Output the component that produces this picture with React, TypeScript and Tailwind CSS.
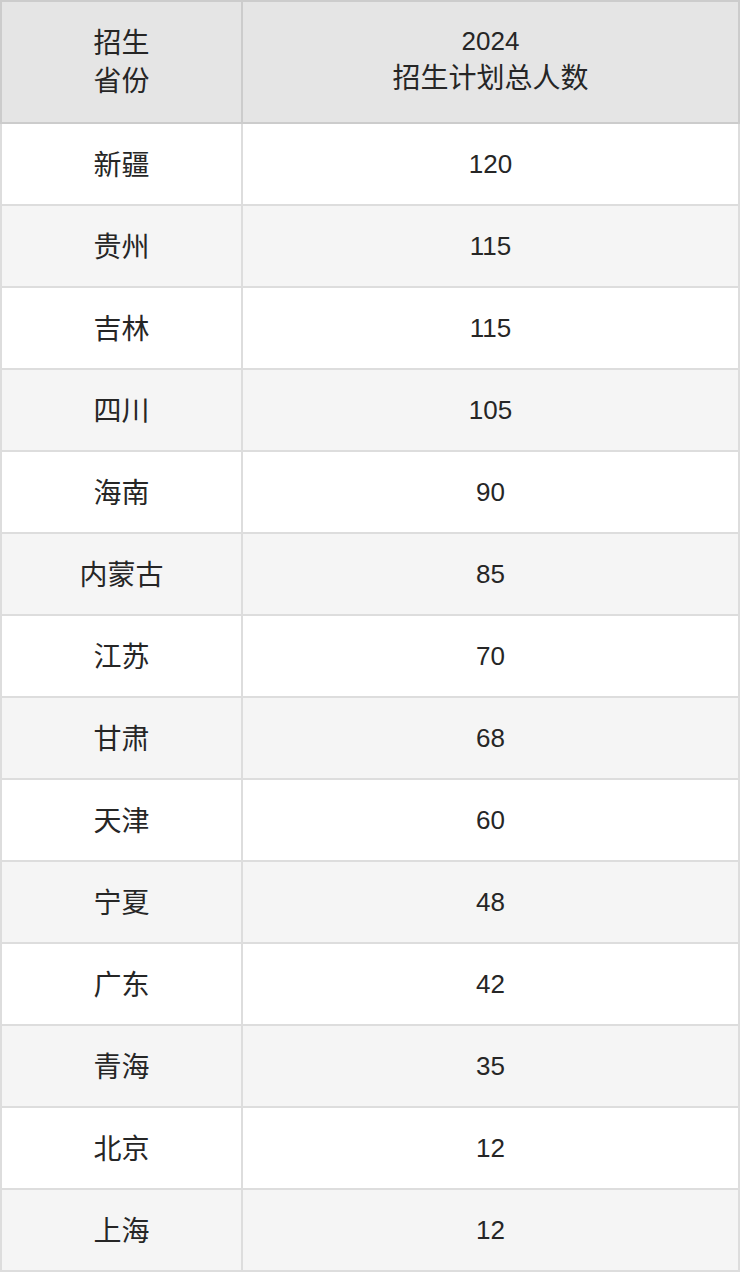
import React from 'react';

const rows: [string, string][] = [
  ['新疆', '120'],
  ['贵州', '115'],
  ['吉林', '115'],
  ['四川', '105'],
  ['海南', '90'],
  ['内蒙古', '85'],
  ['江苏', '70'],
  ['甘肃', '68'],
  ['天津', '60'],
  ['宁夏', '48'],
  ['广东', '42'],
  ['青海', '35'],
  ['北京', '12'],
  ['上海', '12'],
];

export default function App() {
  return (
    <div className="w-[740px] bg-white text-[#262626] font-['Liberation_Sans','Noto_Sans_CJK_SC',sans-serif] text-[26px] leading-[38px]">
      <table className="w-full border-collapse table-fixed">
        <colgroup>
          <col className="w-[241px]" />
          <col />
        </colgroup>
        <thead>
          <tr className="bg-[#e5e5e5]">
            <th className="h-[122px] pt-[2px] border-2 border-[#ccc] text-center font-normal leading-[38px] text-[28px]">
              招生
              <br />
              省份
            </th>
            <th className="h-[122px] pb-1 border-2 border-[#ccc] text-center font-normal leading-[37px]">
              <span className="text-[26px]">2024</span>
              <br />
              <span className="text-[28px]">招生计划总人数</span>
            </th>
          </tr>
        </thead>
        <tbody>
          {rows.map(([prov, num], i) => (
            <tr key={prov} className={i % 2 === 1 ? 'bg-[#f5f5f5]' : 'bg-white'}>
              <td className="h-[82px] pt-[3px] border-2 border-[#ddd] text-center text-[28px]">{prov}</td>
              <td className="h-[82px] border-2 border-[#ddd] text-center">{num}</td>
            </tr>
          ))}
        </tbody>
      </table>
    </div>
  );
}
